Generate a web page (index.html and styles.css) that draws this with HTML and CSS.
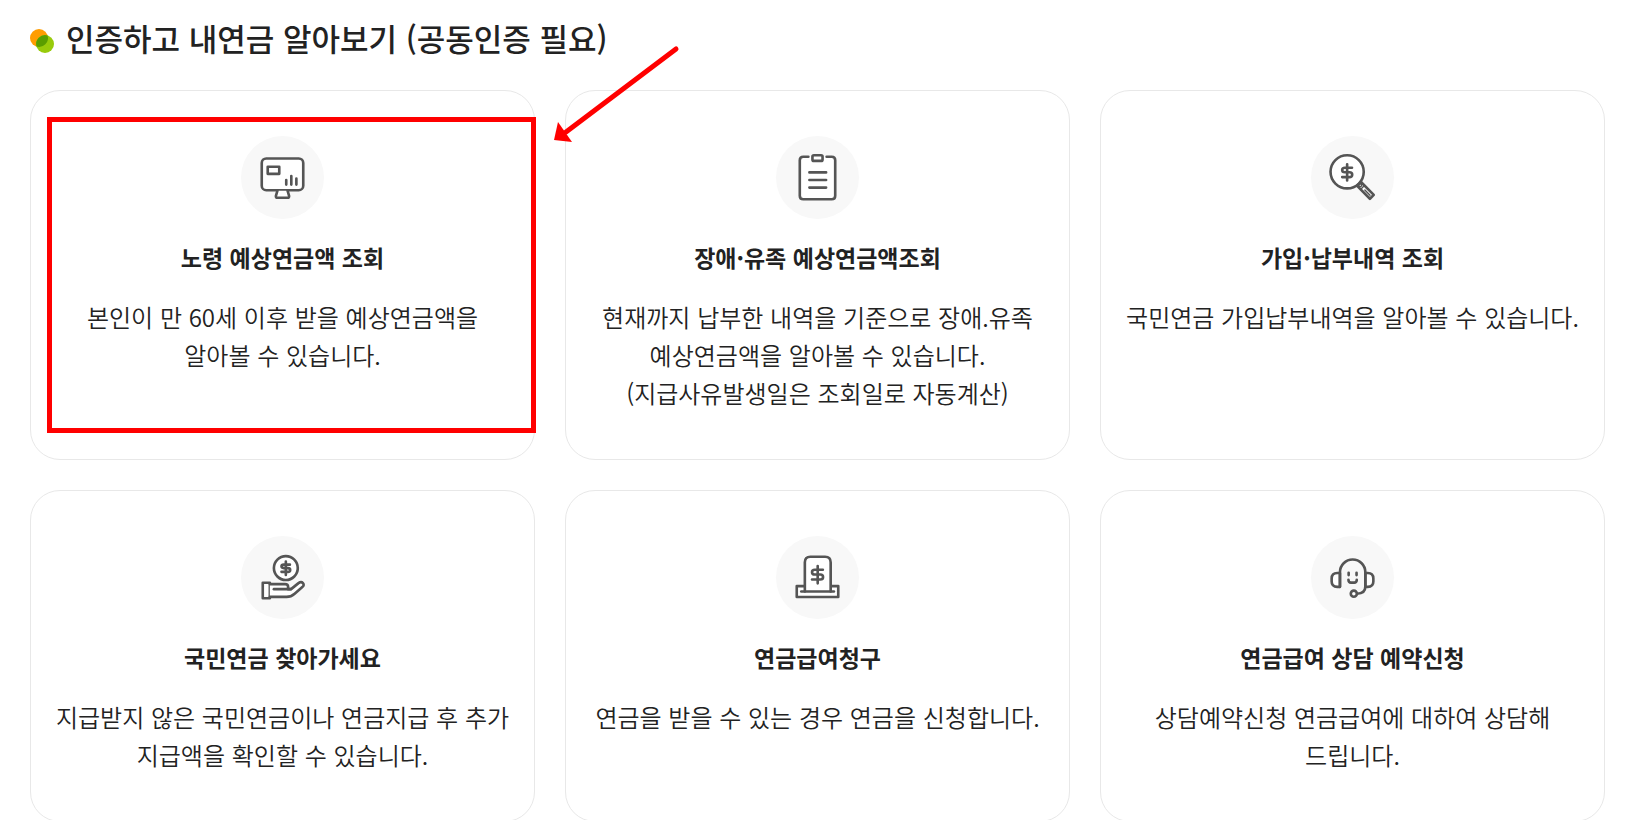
FILE: index.html
```html
<!DOCTYPE html>
<html lang="ko">
<head>
  <meta charset="UTF-8">
  <meta name="viewport" content="width=device-width, initial-scale=1.0">
  <title>인증하고 내연금 알아보기</title>
  <link rel="stylesheet" href="styles.css">
</head>
<body>
  <main class="contents">
    <h2 class="title">
      <svg class="title-mark" viewBox="0 0 24 24" aria-hidden="true">
        <circle cx="9" cy="9" r="9" fill="#ff9d00"/>
        <circle cx="15" cy="15" r="9" fill="#98cb0b"/>
        <path d="M6.5 17.6A9 9 0 0 1 17.6 6.4A9 9 0 0 1 6.5 17.6Z" fill="#5a9e00"/>
      </svg>
      인증하고 내연금 알아보기 (공동인증 필요)
    </h2>

    <div class="card-list">
      <a class="card" href="#">
        <svg class="icon" viewBox="0 0 82 82" aria-hidden="true">
          <rect x="20.5" y="22.2" width="41" height="31.4" rx="4.5"/>
          <rect x="26.4" y="30.4" width="11.4" height="7"/>
          <path d="M44.7 43.5V48M49.7 39.5V48M54.7 42V48"/>
          <path d="M36 54L34.5 59.2Q34.2 61 36 61H46Q47.8 61 47.5 59.2L46 54"/>
        </svg>
        <strong class="card-title">노령 예상연금액 조회</strong>
        <span class="card-text">본인이 만 60세 이후 받을 예상연금액을<br>알아볼 수 있습니다.</span>
        <span class="mark-box"></span>
      </a>

      <a class="card" href="#">
        <svg class="icon" viewBox="0 0 82 82" aria-hidden="true">
          <path d="M32 20.5H27Q23.5 20.5 23.5 24V59Q23.5 62.5 27 62.5H55Q58.5 62.5 58.5 59V24Q58.5 20.5 55 20.5H50"/>
          <rect x="36" y="19" width="10" height="5.6" rx="1.5"/>
          <path d="M33 36H49.5M33 43.5H49.5M33 51H49.5"/>
        </svg>
        <strong class="card-title">장애·유족 예상연금액조회</strong>
        <span class="card-text">현재까지 납부한 내역을 기준으로 장애.유족<br>예상연금액을 알아볼 수 있습니다.<br>(지급사유발생일은 조회일로 자동계산)</span>
      </a>

      <a class="card" href="#">
        <svg class="icon" viewBox="0 0 82 82" aria-hidden="true">
          <circle cx="35.7" cy="35.4" r="16.4"/>
          <path class="line" d="M40.5 31.4H33.5Q30.8 31.4 30.8 33.6T33.5 35.8H38Q40.7 35.8 40.7 38.2T38 40.6H30.8M35.7 28V44"/>
          <path d="M45.6 49.2L49.4 45.4L62 58.2L58.2 62Z"/>
          <path class="thin" d="M49.2 52.6L52.8 49M53.2 53.4L58.3 58.5"/>
          <circle class="thin" cx="48.6" cy="48.6" r="1.4"/>
        </svg>
        <strong class="card-title">가입·납부내역 조회</strong>
        <span class="card-text">국민연금 가입납부내역을 알아볼 수 있습니다.</span>
      </a>

      <a class="card" href="#">
        <svg class="icon" viewBox="0 0 82 82" aria-hidden="true">
          <circle cx="44.3" cy="31.7" r="11.8"/>
          <path class="line" d="M48.3 28.3H42.3Q40 28.3 40 30T42.3 31.7H46.3Q48.6 31.7 48.6 33.6T46.3 35.4H40M44.3 25.2V38.5"/>
          <rect x="21.5" y="46.2" width="7" height="15.3"/>
          <path d="M28.5 47.5H43.5Q46.5 47.5 46.5 50V52.5H49.5L56.5 46.8Q59.5 44.6 61.2 46.6T60.6 50.4L53 57Q49.5 60.2 45 60.2H28.5"/>
          <path class="line" d="M32.5 52.5H49"/>
        </svg>
        <strong class="card-title">국민연금 찾아가세요</strong>
        <span class="card-text">지급받지 않은 국민연금이나 연금지급 후 추가<br>지급액을 확인할 수 있습니다.</span>
      </a>

      <a class="card" href="#">
        <svg class="icon" viewBox="0 0 82 82" aria-hidden="true">
          <rect x="20.5" y="49.5" width="41" height="10.8"/>
          <path d="M28.5 54.8V26Q28.5 20.5 34 20.5H48.5Q54 20.5 54 26V54.8"/>
          <path class="line" d="M25 54.8H57.2"/>
          <path class="line" d="M46.3 33.4H38.3Q35.6 33.4 35.6 35.7T38.3 38H43.7Q46.5 38 46.5 40.5T43.7 43H35.6M41.2 29.6V46.8"/>
        </svg>
        <strong class="card-title">연금급여청구</strong>
        <span class="card-text">연금을 받을 수 있는 경우 연금을 신청합니다.</span>
      </a>

      <a class="card" href="#">
        <svg class="icon" viewBox="0 0 82 82" aria-hidden="true">
          <path d="M28.6 50.2V36.5H26Q20.4 36.5 20.4 42V45Q20.4 50.2 26 50.2Z"/>
          <path d="M53.7 36.5H56Q61.6 36.5 61.6 42V45Q61.6 50.2 56 50.2H53.7Z"/>
          <path class="line" d="M28.6 50.2V35.8A12.55 12.55 0 0 1 53.7 35.8V50Q53.7 57 45.5 57"/>
          <circle cx="42.3" cy="57" r="3"/>
          <path class="line" d="M37.2 36.3V38.6M45 36.3V38.6M37 43.2Q37 46 39.5 46H42.7Q45.2 46 45.2 43.2"/>
        </svg>
        <strong class="card-title">연금급여 상담 예약신청</strong>
        <span class="card-text">상담예약신청 연금급여에 대하여 상담해<br>드립니다.</span>
      </a>
    </div>

    <svg class="mark-arrow" viewBox="0 0 126 98" aria-hidden="true">
      <path d="M122 4L12 87" fill="none" stroke="#f00" stroke-width="5" stroke-linecap="round"/>
      <path d="M0 95L4 77L18 97Z" fill="#f00"/>
    </svg>
  </main>
</body>
</html>
```
FILE: styles.css
```css
* {
  box-sizing: border-box;
}
body {
  margin: 0;
  background-color: #fff;
  color: #222;
  font-family: "Noto Sans CJK KR", sans-serif;
  word-break: keep-all;
}
.contents {
  position: relative;
  padding: 14px 31px 30px 30px;
}
.title {
  display: flex;
  align-items: center;
  gap: 12px;
  margin: 0 0 28px;
  font-size: 31px;
  font-weight: 500;
  line-height: 48px;
}
.title-mark {
  width: 24px;
  height: 24px;
  margin-top: 6px;
}

/* cards */
.card-list {
  display: grid;
  grid-template-columns: repeat(3, 1fr);
  gap: 30px;
}
.card {
  position: relative;
  display: flex;
  flex-direction: column;
  align-items: center;
  padding: 45px 20px 47px;
  border: 1px solid #e8e8e8;
  border-radius: 30px;
  color: #222;
  text-align: center;
  text-decoration: none;
}
.card-title {
  margin: 20px 0 23px;
  font-size: 23px;
  font-weight: 700;
  line-height: 36px;
}
.card-text {
  font-size: 24px;
  font-weight: 350;
  line-height: 38px;
}

/* icons */
.icon {
  width: 83px;
  height: 83px;
  border-radius: 50%;
  background-color: #f8f8f8;
  fill: #fff;
  stroke: #555;
  stroke-width: 2.6;
  stroke-linecap: round;
  stroke-linejoin: round;
}
.icon .line {
  fill: none;
}
.icon .thin {
  fill: none;
  stroke-width: 1.4;
}

/* red marks over the cards */
.mark-box {
  position: absolute;
  top: 26px;
  right: -2px;
  bottom: 26px;
  left: 16px;
  border: 5px solid #f00;
}
.mark-arrow {
  position: absolute;
  top: 45px;
  left: 554px;
  width: 126px;
  height: 98px;
}
```
